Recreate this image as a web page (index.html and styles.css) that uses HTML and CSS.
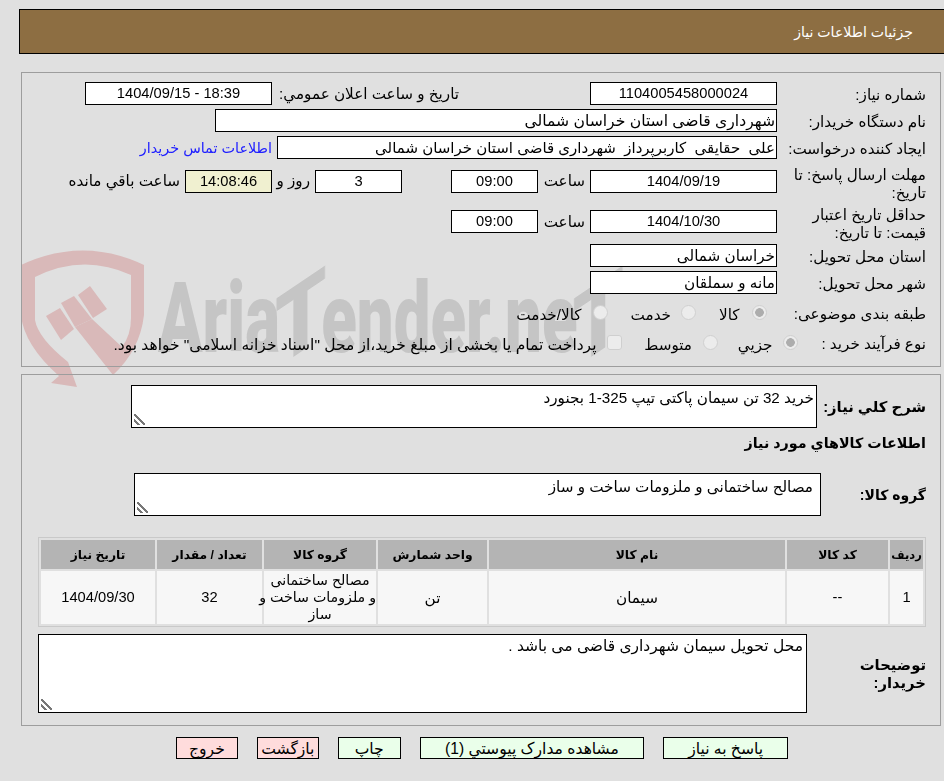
FILE: index.html
```html
<!DOCTYPE html>
<html lang="fa" dir="rtl">
<head>
<meta charset="utf-8">
<title>جزئیات اطلاعات نیاز</title>
<link rel="stylesheet" href="styles.css">
</head>
<body>
<div class="watermark" aria-hidden="true">
  <svg class="wm-shield" viewBox="20 245 135 150">
    <path class="wm-red" d="M21 265 Q83 236 144 265 L144 315 Q140 350 113 375 L75 327 L92 319 L122 347 Q131 335 131 318 L131 275 Q83 253 35 277 L35 320 Q38 338 68 362 L77 387 L51 383 L59 376 Q24 345 21 315 Z"/>
    <polygon class="wm-red" points="46,316 60,308 74,329 61,340"/>
    <polygon class="wm-red" points="61,303 74,296 92,319 75,327"/>
    <polygon class="wm-red" points="78,295 90,286 107,309 93,318"/>
  </svg>
  <div class="wm-text">Aria<span class="wm-t">T</span>ender.ne<span class="wm-t">T</span></div>
</div>

<header class="title-bar"><h1>جزئیات اطلاعات نیاز</h1></header>

<section class="panel panel-top">
  <div class="row r23">
    <div class="label">شماره نیاز:</div>
    <div class="box w187 center num">1104005458000024</div>
    <div class="label-b">تاریخ و ساعت اعلان عمومي:</div>
    <div class="box w187 center num"><bdi>1404/09/15 - 18:39</bdi></div>
  </div>
  <div class="row r23">
    <div class="label">نام دستگاه خریدار:</div>
    <div class="box w562 fit-l">شهرداری قاضی استان خراسان شمالی</div>
  </div>
  <div class="row r23">
    <div class="label">ایجاد کننده درخواست:</div>
    <div class="box w500 fit-s">علی  حقایقی  کاربرپرداز  شهرداری قاضی استان خراسان شمالی</div>
    <a class="link" href="#">اطلاعات تماس خریدار</a>
  </div>
  <div class="row r36">
    <div class="label two">مهلت ارسال پاسخ: تا تاریخ:</div>
    <div class="box w187 center num">1404/09/19</div>
    <div class="unit">ساعت</div>
    <div class="box w87 center num">09:00</div>
    <div class="box w87 center num gap49">3</div>
    <div class="unit-day">روز و</div>
    <div class="box w87 center num timer">14:08:46</div>
    <div class="unit-left">ساعت باقي مانده</div>
  </div>
  <div class="row r37">
    <div class="label two">حداقل تاریخ اعتبار قیمت: تا تاریخ:</div>
    <div class="box w187 center num">1404/10/30</div>
    <div class="unit">ساعت</div>
    <div class="box w87 center num">09:00</div>
  </div>
  <div class="row r23">
    <div class="label">استان محل تحویل:</div>
    <div class="box w187">خراسان شمالی</div>
  </div>
  <div class="row r23">
    <div class="label">شهر محل تحویل:</div>
    <div class="box w187">مانه و سملقان</div>
  </div>
  <div class="row r30">
    <div class="label">طبقه بندی موضوعی:</div>
    <input class="opt m10" type="radio" name="cat" checked disabled>
    <span class="opt-text ms12 w19 me24">کالا</span>
    <input class="opt" type="radio" name="cat" disabled>
    <span class="opt-text ms10 w40 me23">خدمت</span>
    <input class="opt" type="radio" name="cat" disabled>
    <span class="opt-text ms11">کالا/خدمت</span>
  </div>
  <div class="row r22">
    <div class="label label-s">نوع فرآیند خرید :</div>
    <input class="opt" type="radio" name="proc" checked disabled>
    <span class="opt-text ms10 w35 me19">جزیي</span>
    <input class="opt" type="radio" name="proc" disabled>
    <span class="opt-text ms11 w45 me25">متوسط</span>
    <input class="opt" type="checkbox" disabled>
    <span class="opt-text ms10 long">پرداخت تمام یا بخشی از مبلغ خرید،از محل "اسناد خزانه اسلامی" خواهد بود.</span>
  </div>
</section>

<section class="panel panel-bottom">
  <div class="row">
    <div class="strong l109">شرح کلي نياز:</div>
    <textarea class="ta ta-desc" readonly>خرید 32 تن سیمان پاکتی تیپ 325-1 بجنورد</textarea>
  </div>
  <h2 class="strong section-title">اطلاعات کالاهاي مورد نياز</h2>
  <div class="row group-row">
    <div class="strong l105 small">گروه کالا:</div>
    <textarea class="ta ta-group" readonly>مصالح ساختمانی و ملزومات ساخت و ساز</textarea>
  </div>
  <table class="items">
    <thead>
      <tr>
        <th class="c1">ردیف</th><th class="c2">کد کالا</th><th class="c3">نام کالا</th><th class="c4">واحد شمارش</th><th class="c5">گروه کالا</th><th class="c6">تعداد / مقدار</th><th class="c7">تاریخ نیاز</th>
      </tr>
    </thead>
    <tbody>
      <tr>
        <td class="num">1</td><td class="num">--</td><td>سیمان</td><td>تن</td><td class="tight">مصالح ساختمانی<br>و ملزومات ساخت و<br>ساز</td><td class="num">32</td><td class="num">1404/09/30</td>
      </tr>
    </tbody>
  </table>
  <div class="row notes-row">
    <div class="strong l119">توضیحات خریدار:</div>
    <textarea class="ta ta-notes" readonly>محل تحویل سیمان شهرداری قاضی می باشد .</textarea>
  </div>
</section>

<nav class="actions">
  <button class="btn go b125" type="button">پاسخ به نیاز</button>
  <button class="btn go b225" type="button">مشاهده مدارک پیوستي (1)</button>
  <button class="btn go b63" type="button">چاپ</button>
  <button class="btn stop b62" type="button">بازگشت</button>
  <button class="btn stop b62" type="button">خروج</button>
</nav>
</body>
</html>
```

FILE: styles.css
```css
* { box-sizing: border-box; }
html, body { margin: 0; height: 781px; overflow: hidden; }
body {
  background: #e0e0e0;
  color: #000;
  font-family: "Liberation Sans", "DejaVu Sans", sans-serif;
  font-size: 15.2px;
  padding-top: 9px;
  position: relative;
}
.num { font-size: 14.7px; }
.fit-l { font-size: 15.6px; }
.fit-s { font-size: 15px; }

.watermark { position: absolute; left: 0; top: 0; width: 944px; height: 400px; overflow: hidden; }
.wm-shield { position: absolute; left: 20px; top: 245px; width: 135px; height: 150px; }
.wm-red { fill: #d9b9b9; }
.wm-text {
  position: absolute; left: 158px; top: 258px;
  direction: ltr; white-space: nowrap;
  font: 900 99px/120px Roboto, sans-serif;
  color: #c5c5c5;
  transform: scaleX(.66); transform-origin: left top;
}
.wm-t {
  display: inline-block;
  transform: skewY(-24deg) scaleX(1.25);
  transform-origin: center 85%;
}

.title-bar {
  position: relative;
  height: 45px; margin-left: 19px;
  background: #8d6e42;
  border: 1px solid #000; border-right: 0;
  display: flex; align-items: center;
  padding-right: 31px;
}
.title-bar h1 { margin: 0; font-size: 14.1px; font-weight: 400; color: #fff; }

.panel {
  position: relative;
  margin: 0 3px 0 21px;
  border: 1px solid #9d9d9d;
  padding-right: 14px;
}
.panel-top { margin-top: 18px; height: 295px; padding-top: 9px; }
.panel-bottom { margin-top: 7px; height: 352px; padding-top: 10px; }

.row { display: flex; align-items: center; }
.panel-top .row { margin-bottom: 4px; }
.r23 { height: 23px; }
.r36 { height: 36px; }
.r37 { height: 37px; }
.r30 { height: 30px; }
.r22 { height: 22px; }

.label { width: 149px; flex: none; line-height: 18px; padding-top: 2px; }
.label.two { padding-top: 5px; }
.label-s { width: 128.5px; }
.label-b { width: 181px; margin: 0 131px 0 6px; flex: none; }

.box {
  height: 23px; flex: none;
  background: #fff; border: 1px solid #000;
  padding: 0 1px; line-height: 21px; white-space: pre;
}
.center { text-align: center; }
.w187 { width: 187px; }
.w562 { width: 562px; }
.w500 { width: 500px; }
.w87 { width: 87px; }
.gap49 { margin-right: 49px; }
.timer { background: #f0f0d0; }
.link { margin-right: 5px; color: #2020ff; text-decoration: none; white-space: nowrap; font-size: 14.4px; }
.unit { width: 43px; margin: 0 5px 0 4px; flex: none; text-align: right; white-space: nowrap; }
.unit-day { width: 28px; margin: 0 5px 0 10px; flex: none; white-space: nowrap; }
.unit-left { margin-right: 5px; white-space: nowrap; }

.opt {
  appearance: none;
  width: 15px; height: 15px; margin: -2px 0 0; flex: none;
  background: #ececec; border: 1px solid #cfcfcf;
}
.opt[type="radio"] { border-radius: 50%; }
.opt[type="checkbox"] { border-radius: 3px; }
.opt:checked { background: radial-gradient(circle, #adadad 0 4px, #ececec 4.6px); }
.m10 { margin-right: 10.5px; }
.opt-text { flex: none; white-space: nowrap; padding-top: 3px; }
.long { font-size: 15.5px; }
.ms10 { margin-right: 10px; }
.ms11 { margin-right: 11px; }
.ms12 { margin-right: 12px; }
.me19 { margin-left: 19.5px; }
.me23 { margin-left: 23.5px; }
.me24 { margin-left: 24.5px; }
.me25 { margin-left: 25.5px; }
.w19 { width: 19px; }
.w35 { width: 35px; }
.w40 { width: 40px; }
.w45 { width: 45px; }

.strong { font-weight: 700; font-size: 14.8px; line-height: 18px; flex: none; }
.small { font-size: 14px; }
.l109 { width: 109px; }
.l105 { width: 105px; }
.l119 { width: 119px; }
.section-title { margin: 6px 0 0; font-size: 14.3px; height: 20px; }
.group-row { margin-top: 19px; }
.notes-row { margin-top: 7px; }

.ta {
  display: block; flex: none;
  background: #fff; border: 1px solid #000; border-radius: 0;
  font: inherit; color: #000; line-height: 18px;
  overflow: hidden; outline: 0;
}
.ta::-webkit-resizer {
  background: linear-gradient(45deg, transparent 0 18%, #777 18% 30%, transparent 30% 44%, #777 44% 56%, transparent 56%) left 2px bottom 2px / 11px 11px no-repeat;
}
.ta-desc { width: 686px; height: 43px; padding: 3px 2px; }
.ta-group { width: 687px; height: 43px; padding: 4px 7px; }
.ta-notes { width: 769px; height: 79px; padding: 2px 3px; font-size: 15.5px; }

.items {
  margin: 21px 0 0 0;
  width: 887px;
  table-layout: fixed;
  border: 1px solid #c9c9c9;
  border-spacing: 2px;
}
.items th {
  height: 29px; padding: 0;
  background: #b4b4b4; font-size: 12.3px; font-weight: 700;
}
.items th.c1 { font-size: 11.5px; }
.items td {
  height: 53px; padding: 0 1px;
  background: #f7f7f7; text-align: center; line-height: 17px;
}
.items td.tight { font-size: 14.2px; padding: 0; white-space: nowrap; }
.c1 { width: 33px; }
.c2 { width: 101px; }
.c3 { width: 296px; }
.c4 { width: 109px; }
.c5 { width: 112px; }
.c6 { width: 105px; }
.c7 { width: 114px; }

.actions {
  position: relative;
  display: flex; justify-content: center; gap: 19px;
  margin: 11px 156px 0 176px;
}
.btn {
  height: 22px; padding: 1px 0 0;
  border: 1px solid #000; border-radius: 0;
  font: inherit; font-size: 15.6px; color: #000; line-height: 19px;
}
.go { background: #eaffea; }
.stop { background: #ffdcdc; }
.b125 { width: 125px; }
.b225 { width: 225px; }
.b63 { width: 63px; }
.b62 { width: 62px; }
```
